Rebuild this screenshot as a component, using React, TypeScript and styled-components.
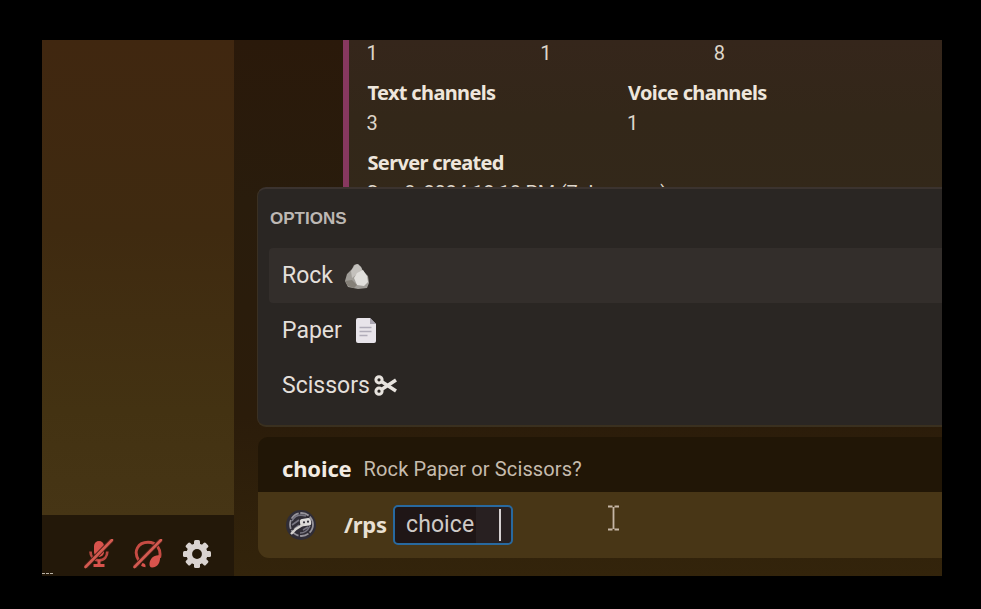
import React from "react";
import styled, { createGlobalStyle } from "styled-components";

const GlobalStyle = createGlobalStyle`
  * { box-sizing: border-box; }
  html, body { margin: 0; background: #000; overflow: hidden; }
  svg { display: block; flex: none; }
`;

const Stage = styled.main`
  width: 981px;
  height: 609px;
  padding: 40px 39px 33px 42px;
  background: #000;
  font-family: Roboto, "Noto Sans", sans-serif;
`;

const Window = styled.div`
  display: flex;
  width: 900px;
  height: 536px;
  overflow: hidden;
`;

const Sidebar = styled.aside`
  display: flex;
  flex-direction: column;
  width: 191.5px;
  flex: none;
`;

const ChannelList = styled.div`
  flex: 1;
  background: linear-gradient(180deg, #402710 0%, #3f2a10 40%, #433212 78%, #463515 100%);
`;

const UserPanel = styled.div`
  position: relative;
  display: flex;
  align-items: flex-start;
  height: 61px;
  padding: 24px 0 0 42px;
  gap: 19px;
  background: #231809;
`;

const ClippedStatus = styled.span`
  position: absolute;
  left: 0;
  bottom: 2px;
  width: 11px;
  border-bottom: 1px dashed #b9b2a6;
`;

const Chat = styled.section`
  position: relative;
  display: flex;
  flex-direction: column;
  width: 708.5px;
  flex: none;
  background: linear-gradient(180deg, #2a190a 0%, #291c0c 30%, #2b1c0a 70%, #33240b 100%);
`;

const History = styled.div`
  height: 397px;
  flex: none;
  padding-left: 109px;
  overflow: hidden;
`;

const Embed = styled.article`
  height: 220px;
  padding-left: 19px;
  border-left: 6px solid #87385f;
  background: linear-gradient(180deg, #35261b 0%, #332719 35%, #33291a 100%);
  overflow: hidden;
`;

const Fields = styled.div<{ $columns: number }>`
  display: grid;
  grid-template-columns: repeat(${(p) => p.$columns}, 1fr);
  width: 521px;
  margin-bottom: 10px;

  &:first-child { margin-top: -2px; }
`;

const FieldName = styled.h3`
  margin: 0;
  font: 700 20px/30px "Noto Sans", sans-serif;
  font-stretch: 90%;
  letter-spacing: -0.65px;
  color: #eee6dc;
`;

const FieldValue = styled.div`
  font: 400 20px/30px Roboto, sans-serif;
  letter-spacing: -0.25px;
  color: #ded6ca;
  white-space: nowrap;
  text-indent: -1px;
`;

const OptionsPopup = styled.div`
  position: absolute;
  left: 23.5px;
  top: 147px;
  width: 700px;
  height: 240px;
  padding: 13px 0 0 11px;
  border: 1px solid #3a3023;
  border-top: 2px solid #3b332f;
  border-bottom: 2px solid #3a301f;
  border-radius: 9px;
  background: #2a2623;
`;

const OptionsTitle = styled.h2`
  margin: 0 0 12px;
  padding-left: 1px;
  font: 700 17px/34px "Liberation Sans", sans-serif;
  letter-spacing: 0;
  color: #bdb8b4;
`;

const Option = styled.div<{ $active?: boolean; $gap: number }>`
  display: flex;
  align-items: center;
  height: 55px;
  padding-left: 13px;
  gap: ${(p) => p.$gap}px;
  border-radius: 4px;
  background: ${(p) => (p.$active ? "#332e2b" : "transparent")};
  font: 400 23px/30px Roboto, sans-serif;
  color: #e3dfda;
`;

const Hint = styled.div`
  display: flex;
  align-items: center;
  height: 55px;
  flex: none;
  margin-left: 24.5px;
  padding: 8px 0 0 24px;
  gap: 12px;
  border-radius: 10px 0 0 0;
  background: #211606;
`;

const HintName = styled.strong`
  margin-top: -2px;
  font: 700 22px/30px "Noto Sans", sans-serif;
  letter-spacing: -0.15px;
  color: #f2ebe2;
`;

const HintText = styled.span`
  font: 400 20px/30px Roboto, sans-serif;
  letter-spacing: 0.13px;
  color: #c6bcae;
`;

const Composer = styled.div`
  position: relative;
  display: flex;
  align-items: center;
  height: 66px;
  flex: none;
  margin-left: 24px;
  padding-left: 28.5px;
  border-radius: 0 0 0 11px;
  background: #483616;
`;

const Command = styled.span`
  width: 49px;
  margin: -2px 0 0 28px;
  font: 700 22px/30px "Noto Sans", sans-serif;
  letter-spacing: -0.3px;
  color: #e9e0d2;
`;

const Argument = styled.div`
  display: flex;
  align-items: center;
  width: 120px;
  height: 40px;
  padding-left: 11px;
  border: 2px solid #28699f;
  border-radius: 5px;
  background: linear-gradient(90deg, #1f1616 0 81px, #282021 81px 100%);
  font: 400 23px/32px Roboto, sans-serif;
  letter-spacing: 0.1px;
  color: #cfcac7;
`;

const Caret = styled.i`
  width: 2px;
  height: 32px;
  margin-left: auto;
  margin-right: 10px;
  background: #d6d1d2;
`;

const Pointer = styled.div`
  position: absolute;
  left: 349px;
  top: 13px;
`;

const MutedMic = () => (
  <svg width="30" height="30" viewBox="0 0 30 30" fill="none">
    <rect x="10" y="2" width="10" height="16" rx="5" fill="#d8534c" />
    <path d="M6.500 12.500c0 5 3 8.800 8.400 8.800s8.400-3.800 8.400-8.800" stroke="#b84740" strokeWidth="2.700" />
    <path d="M15 21v5M9.500 26.500h11" stroke="#d8534c" strokeWidth="3" />
    <path d="M1.500 28 28 1" stroke="#4a201a" strokeWidth="4.600" />
    <path d="M1.500 28 28 1" stroke="#d45b50" strokeWidth="2.600" strokeLinecap="round" />
  </svg>
);

const Deafened = () => (
  <svg width="30" height="30" viewBox="0 0 30 30" fill="none">
    <path d="M6 22C-.5 12 5.300 3.300 15 3.300c8.700 0 13.500 7.200 11.600 15.500" stroke="#c64b43" strokeWidth="2.900" />
    <path d="M16.500 25c0-5 4.500-9.500 10.500-8.500.8 6.500-2.300 12-8 12-1.800 0-2.500-1.400-2.500-3.500Z" fill="#d8534c" />
    <path d="M9.500 24c2.500.3 3.300 1.800 3 4.300-1.500 0-3.500-.7-4.500-1.700Z" fill="#d8534c" />
    <path d="M1.500 28 28 1" stroke="#4a201a" strokeWidth="4.600" />
    <path d="M1.500 28 28 1" stroke="#d45b50" strokeWidth="2.600" strokeLinecap="round" />
  </svg>
);

const Gear = () => (
  <svg width="30" height="30" viewBox="0 0 30 30">
    <g fill="#d9d3d0">
      {[0, 45, 90, 135].map((angle) => (
        <rect key={angle} x="12" y="1" width="6" height="28" rx="1.500" transform={`rotate(${angle} 15 15)`} />
      ))}
      <circle cx="15" cy="15" r="10.600" />
    </g>
    <circle cx="15" cy="15" r="4.900" fill="#231809" />
  </svg>
);

const Rock = () => (
  <svg width="26" height="26" viewBox="0 0 26 26">
    <path d="M1 18 3 11l5-5 2-4 3-1 4 3 2 4 5 5 1 7-2 5-9 1-10-2Z" fill="#a09d98" />
    <path d="m7 8 4-6 3-1 3 3 2 5-6 2-5 4Z" fill="#c4c1bd" />
    <path d="m10 15 3-5 6-3 4 6 1 6-4 4-7-1Z" fill="#e1dfdc" />
    <path d="m1 18 7-1 5 5-3 3-6-2Z" fill="#858078" />
  </svg>
);

const Page = () => (
  <svg width="20" height="25" viewBox="0 0 20 25">
    <path d="M2 0h12l6 6v17a2 2 0 0 1-2 2H2a2 2 0 0 1-2-2V2a2 2 0 0 1 2-2Z" fill="#e8e4ea" />
    <path d="M14 0v6h6Z" fill="#aaa6b2" />
    <path d="M3.500 9.500h12M3.500 13.500h12M3.500 17.500h8" stroke="#b0acb9" strokeWidth="1.300" />
  </svg>
);

const Scissors = () => (
  <svg width="23" height="21" viewBox="0 0 23 21" fill="none" stroke="#e7e3de">
    <circle cx="5" cy="4.800" r="3.100" strokeWidth="3" />
    <circle cx="5" cy="16.200" r="3.100" strokeWidth="3" />
    <path d="M7.500 6.500 22 16M7.500 14.500 22 5" strokeWidth="3.500" />
  </svg>
);

const BotAvatar = () => (
  <svg width="30" height="30" viewBox="0 0 30 30" fill="none">
    <circle cx="15" cy="15" r="15" fill="#302d36" />
    <circle cx="15.500" cy="14.500" r="11.500" stroke="#96939a" strokeWidth="1.800" strokeDasharray="9 1.500" />
    <path d="M6 11c3-6 8-7 14-5M6 15l7-5M8 19l5-4M14 23c5 0 8-3 10-7M17 20l5-3" stroke="#777581" strokeWidth="1.600" />
    <rect x="14" y="8.500" width="11" height="7.500" rx="2.500" fill="#dedcdb" transform="rotate(-8 19 12)" />
    <path d="m5 24 5-5 8-5" stroke="#d6d3d0" strokeWidth="2.400" />
    <circle cx="18" cy="12.300" r="1.100" fill="#302d36" />
    <circle cx="22" cy="11.700" r="1.100" fill="#302d36" />
  </svg>
);

const TextPointer = () => (
  <svg width="13" height="26" viewBox="0 0 13 26" fill="none" stroke="#c5b6a5" strokeWidth="1.800">
    <path d="M1 1.500h4.500M7.500 1.500H12M6.500 2v22M1 24.500h4.500M7.500 24.500H12" />
  </svg>
);

export default function App() {
  return (
    <Stage>
      <GlobalStyle />
      <Window>
        <Sidebar>
          <ChannelList />
          <UserPanel>
            <ClippedStatus />
            <MutedMic />
            <Deafened />
            <Gear />
          </UserPanel>
        </Sidebar>
        <Chat>
          <History>
            <Embed>
              <Fields $columns={3}>
                <FieldValue>1</FieldValue>
                <FieldValue>1</FieldValue>
                <FieldValue>8</FieldValue>
              </Fields>
              <Fields $columns={2}>
                <div>
                  <FieldName>Text channels</FieldName>
                  <FieldValue>3</FieldValue>
                </div>
                <div>
                  <FieldName>Voice channels</FieldName>
                  <FieldValue>1</FieldValue>
                </div>
              </Fields>
              <Fields $columns={1}>
                <div>
                  <FieldName>Server created</FieldName>
                  <FieldValue>Sep 8, 2024 12:18 PM (7 days ago)</FieldValue>
                </div>
              </Fields>
            </Embed>
          </History>
          <Hint>
            <HintName>choice</HintName>
            <HintText>Rock Paper or Scissors?</HintText>
          </Hint>
          <Composer>
            <BotAvatar />
            <Command>/rps</Command>
            <Argument>
              choice
              <Caret />
            </Argument>
            <Pointer>
              <TextPointer />
            </Pointer>
          </Composer>
          <OptionsPopup>
            <OptionsTitle>OPTIONS</OptionsTitle>
            <Option $active $gap={11}>Rock <Rock /></Option>
            <Option $gap={14}>Paper <Page /></Option>
            <Option $gap={4}>Scissors <Scissors /></Option>
          </OptionsPopup>
        </Chat>
      </Window>
    </Stage>
  );
}
